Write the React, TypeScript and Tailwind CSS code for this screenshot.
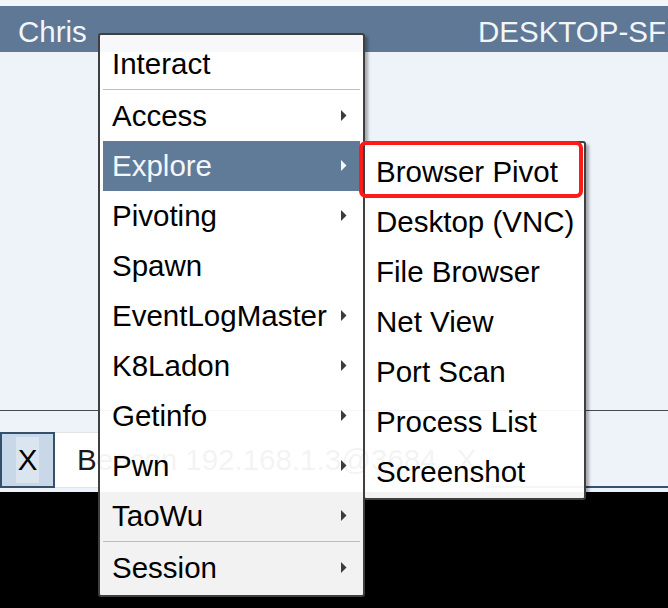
type Item = { label: string; arrow?: boolean; active?: boolean; sepAfter?: boolean };

const mainItems: Item[] = [
  { label: 'Interact', sepAfter: true },
  { label: 'Access', arrow: true },
  { label: 'Explore', arrow: true, active: true },
  { label: 'Pivoting', arrow: true },
  { label: 'Spawn' },
  { label: 'EventLogMaster', arrow: true },
  { label: 'K8Ladon', arrow: true },
  { label: 'Getinfo', arrow: true },
  { label: 'Pwn', arrow: true },
  { label: 'TaoWu', arrow: true, sepAfter: true },
  { label: 'Session', arrow: true },
];

const subItems = ['Browser Pivot', 'Desktop (VNC)', 'File Browser', 'Net View', 'Port Scan', 'Process List', 'Screenshot'];

function Arrow({ light }: { light?: boolean }) {
  return (
    <svg width="6" height="11" viewBox="0 0 6 11" className="shrink-0 -mt-[2px]">
      <polygon points="0,0 5.5,5.5 0,11" fill={light ? '#f4f7fa' : '#3c3c3c'} />
    </svg>
  );
}

function MenuRow({ item }: { item: Item }) {
  return (
    <>
      <div
        className={`mx-[3px] h-[50px] flex items-center justify-between pl-[9px] pr-[13px] ${
          item.active ? 'bg-[#607b98] text-[#f3f6fa]' : 'text-black'
        }`}
      >
        <span>{item.label}</span>
        {item.arrow && <Arrow light={item.active} />}
      </div>
      {item.sepAfter && (
        <div className="h-[2px] mx-[3px] flex items-start">
          <div className="h-px w-full bg-[#bdbdbd]" />
        </div>
      )}
    </>
  );
}

export default function App() {
  return (
    <div className="relative w-[668px] h-[608px] overflow-hidden bg-black font-['Liberation_Sans',Arial,sans-serif] text-[29.5px] leading-none">
      {/* ウィンドウ上部 */}
      <div className="h-[6px] bg-[#f4f5f7]" />
      <div className="h-[46px] bg-[#5e7895] flex items-center justify-between pl-[18px] text-[#f2f5f9] whitespace-nowrap pt-[6px]">
        <span>Chris</span>
        <span className="w-[190px] overflow-hidden">DESKTOP-SFL6</span>
      </div>

      {/* 本体 */}
      <div className="h-[358px] bg-[#eef2f9]" />
      <div className="h-px bg-[#4a4a4a]" />

      {/* タブ */}
      <div className="h-[81px] bg-[#eef2f9] pt-[21px]">
        <div className="flex h-[56px]">
          <div className="w-[55px] h-full border-2 border-[#34506b] bg-[#c9d8e8] flex items-center justify-center">
            <span className="bg-[#dbe5ef] px-[2px] py-[8px]">X</span>
          </div>
          <div className="w-[431px] h-full bg-white border border-[#e4e4e4] border-l-0 flex items-center pl-[22px] text-[#1a1a1a] whitespace-nowrap">
            <span>Beacon 192.168.1.3@3684</span>
            <span className="ml-[20px]">X</span>
          </div>
          <div className="flex-1 h-full border-b-2 border-[#34506b]" />
        </div>
      </div>

      {/* コンテキストメニュー */}
      <div className="absolute left-[98px] top-[33px] w-[267px] border-2 border-[#3f3f3f] rounded-[3px] bg-white/95 pt-[4px] pb-[2px] shadow-[3px_3px_3px_rgba(0,0,0,0.3)]">
        {mainItems.map((item) => (
          <MenuRow key={item.label} item={item} />
        ))}
      </div>

      {/* サブメニュー */}
      <div className="absolute left-[363px] top-[141px] w-[223px] border-2 border-[#3f3f3f] rounded-[3px] bg-white/95 pt-[4px] pb-px shadow-[3px_3px_3px_rgba(0,0,0,0.3)]">
        {subItems.map((label) => (
          <div key={label} className="mx-[3px] h-[50px] flex items-center pl-[8px] text-black whitespace-nowrap">
            {label}
          </div>
        ))}
      </div>

      {/* 赤枠 */}
      <div className="absolute left-[359px] top-[141px] w-[224px] h-[57px] border-4 border-[#ff1a1a] rounded-[7px]" />
    </div>
  );
}
